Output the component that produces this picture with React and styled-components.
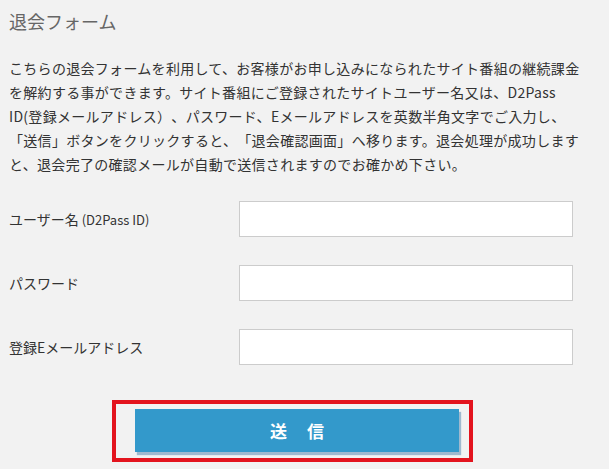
import styled, { createGlobalStyle } from 'styled-components';

const GlobalStyle = createGlobalStyle`
	html, body {
		margin: 0;
		padding: 0;
		background: #f2f2f2;
	}
	body {
		font-family: 'Noto Sans CJK JP', 'Noto Sans', sans-serif;
		color: #333;
		text-spacing-trim: space-all;
	}
`;

const fields = [
	{ label: 'ユーザー名', sub: '(D2Pass ID)', type: 'text' },
	{ label: 'パスワード', type: 'password' },
	{ label: '登録Eメールアドレス', type: 'email' },
];

const App = () => {
	return (
		<>
			<GlobalStyle />
			<Wrapper>
				<Title>退会フォーム</Title>
				<Intro>
					こちらの退会フォームを利用して、お客様がお申し込みになられたサイト番組の継続課金
					<br />
					を解約する事ができます。サイト番組にご登録されたサイトユーザー名又は、D2Pass
					<br />
					ID(登録メールアドレス）、パスワード、Eメールアドレスを英数半角文字でご入力し、
					<br />
					「送信」ボタンをクリックすると、「退会確認画面」へ移ります。退会処理が成功します
					<br />
					と、退会完了の確認メールが自動で送信されますのでお確かめ下さい。
				</Intro>

				<Form onSubmit={(e) => e.preventDefault()}>
					{fields.map((f) => (
						<Row key={f.label}>
							<Label>
								{f.label}
								{f.sub && <Small> {f.sub}</Small>}
							</Label>
							<Input type={f.type} />
						</Row>
					))}

					<Highlight>
						<SubmitButton type='submit'>送信</SubmitButton>
					</Highlight>
				</Form>
			</Wrapper>
		</>
	);
};

const Wrapper = styled.div`
	width: 600px;
	padding: 9px 0 0 9px;
`;

const Title = styled.h2`
	margin: 0;
	font-size: 18px;
	line-height: 24px;
	font-weight: normal;
	color: #666;
`;

const Intro = styled.p`
	margin: 23px 0 0;
	font-size: 14px;
	line-height: 24px;
	letter-spacing: 0.3px;
	color: #333;
	white-space: nowrap;
`;

const Form = styled.form`
	display: flex;
	flex-direction: column;
	margin-top: 25px;
`;

const Row = styled.div`
	display: flex;
	align-items: center;
	height: 36px;
	margin-bottom: 28px;
`;

const Label = styled.label`
	width: 230px;
	font-size: 14px;
	line-height: 20px;
	color: #333;
`;

const Small = styled.span`
	font-size: 13px;
`;

const Input = styled.input`
	width: 334px;
	height: 36px;
	box-sizing: border-box;
	background: #fff;
	border: 1px solid #ccc;
	border-radius: 0;
	outline: none;
`;

const Highlight = styled.div`
	align-self: flex-start;
	margin: 7px 0 0 103px;
	width: 361px;
	height: 62px;
	box-sizing: border-box;
	border: 4px solid #e3141e;
	padding: 5px 10px 0 19px;
`;

const SubmitButton = styled.button`
	display: block;
	width: 324px;
	height: 43px;
	border: none;
	border-radius: 0;
	background: #3399cb;
	box-shadow: 2px 3px 1px #9fb9cf;
	color: #fff;
	font-family: 'Noto Sans CJK JP', sans-serif;
	font-size: 17px;
	font-weight: bold;
	letter-spacing: 20px;
	padding: 0 0 0 20px;
	cursor: pointer;
`;

export default App;
